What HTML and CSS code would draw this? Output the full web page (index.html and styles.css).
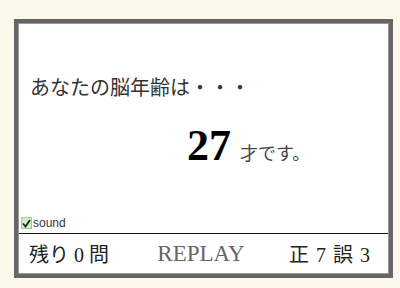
FILE: index.html
```html
<!DOCTYPE html>
<html lang="ja">
<head>
    <meta charset="UTF-8">
    <meta name="viewport" content="width=device-width, initial-scale=1.0">
    <title>脳年齢</title>
    <link rel="stylesheet" href="styles.css">
</head>
<body>

    <div class="frame">
        <div class="screen">
            <p class="lead">あなたの脳年齢は・・・</p>
            <p class="result"><span class="age" id="age">27</span><span class="unit">才です。</span></p>
            <label class="sound">
                <span class="check">
                    <svg width="9" height="9" viewBox="0 0 9 9"><path d="M1 4.5 L3.5 7.5 L8 1" fill="none" stroke="#1a2a1a" stroke-width="1.8"/></svg>
                </span>
                sound
            </label>
        </div>
        <div class="footer">
            <span class="left">残り 0 問</span>
            <span class="replay">REPLAY</span>
            <span class="score">正 7 誤 3</span>
        </div>
    </div>

</body>
</html>
```

FILE: styles.css
```css
body {
    margin: 0;
    padding: 0;
    background-color: #fdf8ec;
    font-family: "Liberation Serif", "Noto Sans CJK JP", serif;
}

.frame {
    margin: 19px 0 0 14px;
    width: 371px;
    height: 251px;
    border: 4px solid #666;
    box-shadow: inset 0 0 0 1px #999;
    background-color: white;
    display: flex;
    flex-direction: column;
}

.screen {
    flex: 1;
    display: flex;
    flex-direction: column;
    border-bottom: 1px solid #111;
    margin: 1px 1px 0 1px;
}

.lead {
    margin: 52px 0 0 11px;
    font-size: 20px;
    line-height: 24px;
    color: #333;
}

.result {
    margin: 24px 0 0 168px;
    display: flex;
    align-items: baseline;
    gap: 9px;
}

.age {
    font-size: 44px;
    font-weight: bold;
    line-height: 44px;
    color: #000;
}

.unit {
    font-size: 18px;
    color: #444;
}

.sound {
    margin-top: auto;
    margin-left: 2px;
    margin-bottom: 3px;
    display: flex;
    align-items: center;
    gap: 1px;
    font-family: "Liberation Sans", Arial, sans-serif;
    font-size: 12px;
    color: #334;
}

.check {
    width: 9px;
    height: 10px;
    border: 1px solid #9c9;
    background-color: #d4ecc8;
    display: flex;
    justify-content: center;
    align-items: center;
}

.footer {
    height: 39px;
    margin: 0 1px 1px 1px;
    display: flex;
    justify-content: space-between;
    align-items: center;
    padding: 0 18px 0 10px;
    font-size: 20px;
    color: #222;
}

.replay {
    font-size: 23px;
    color: #666;
    margin-left: 4px;
}

.score {
    word-spacing: 2px;
}
```
